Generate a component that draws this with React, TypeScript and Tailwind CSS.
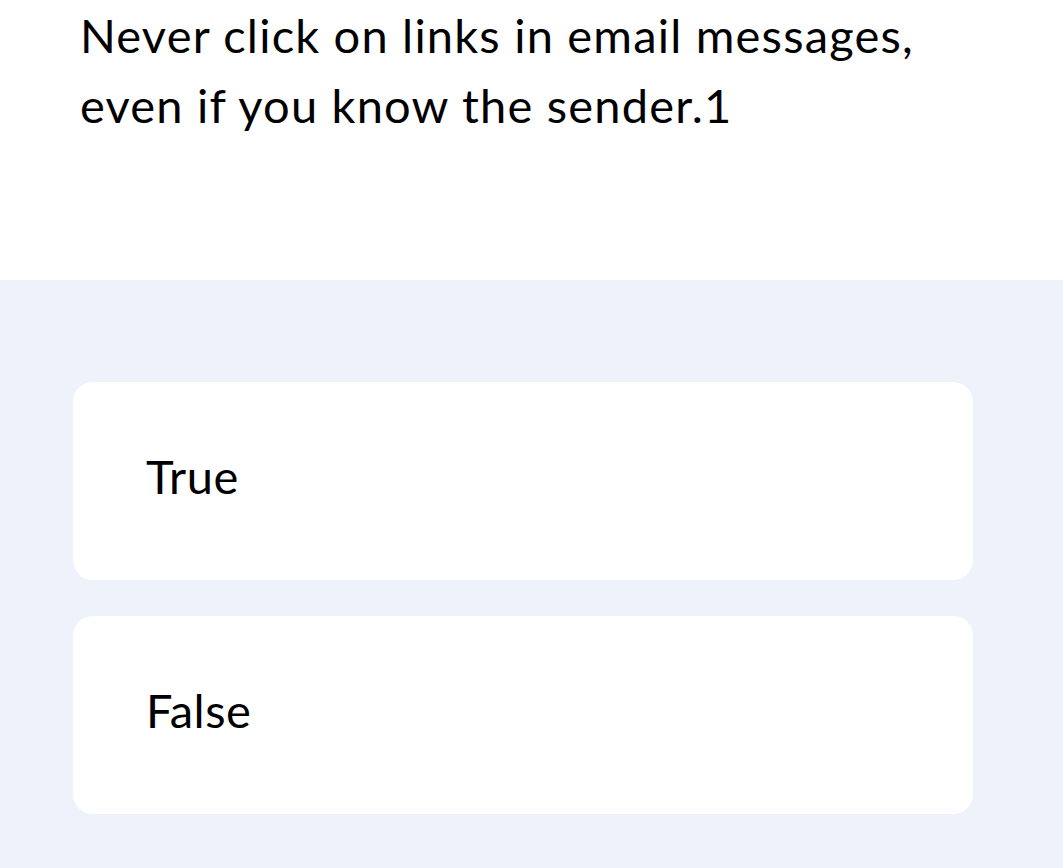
const options = ["True", "False"];

export default function App() {
  return (
    <div className="min-h-screen bg-white font-['Lato','Noto_Sans',sans-serif] text-black">
      <div className="h-[280px] px-[80px]">
        <h1 className="w-[880px] text-[47px] leading-[70px] font-normal tracking-[1.2px]">
          Never click on links in email messages, even if you know the sender.1
        </h1>
      </div>
      <div className="min-h-[588px] bg-[#eef2fa] pt-[102px] pl-[73px] pr-[90px] pb-10">
        <div className="flex flex-col gap-[36px]">
          {options.map((opt) => (
            <div
              key={opt}
              className="flex h-[198px] items-center rounded-[20px] bg-white px-[73px] pb-[10px]"
            >
              <span className="text-[47px] leading-none tracking-[0.5px]">{opt}</span>
            </div>
          ))}
        </div>
      </div>
    </div>
  );
}
